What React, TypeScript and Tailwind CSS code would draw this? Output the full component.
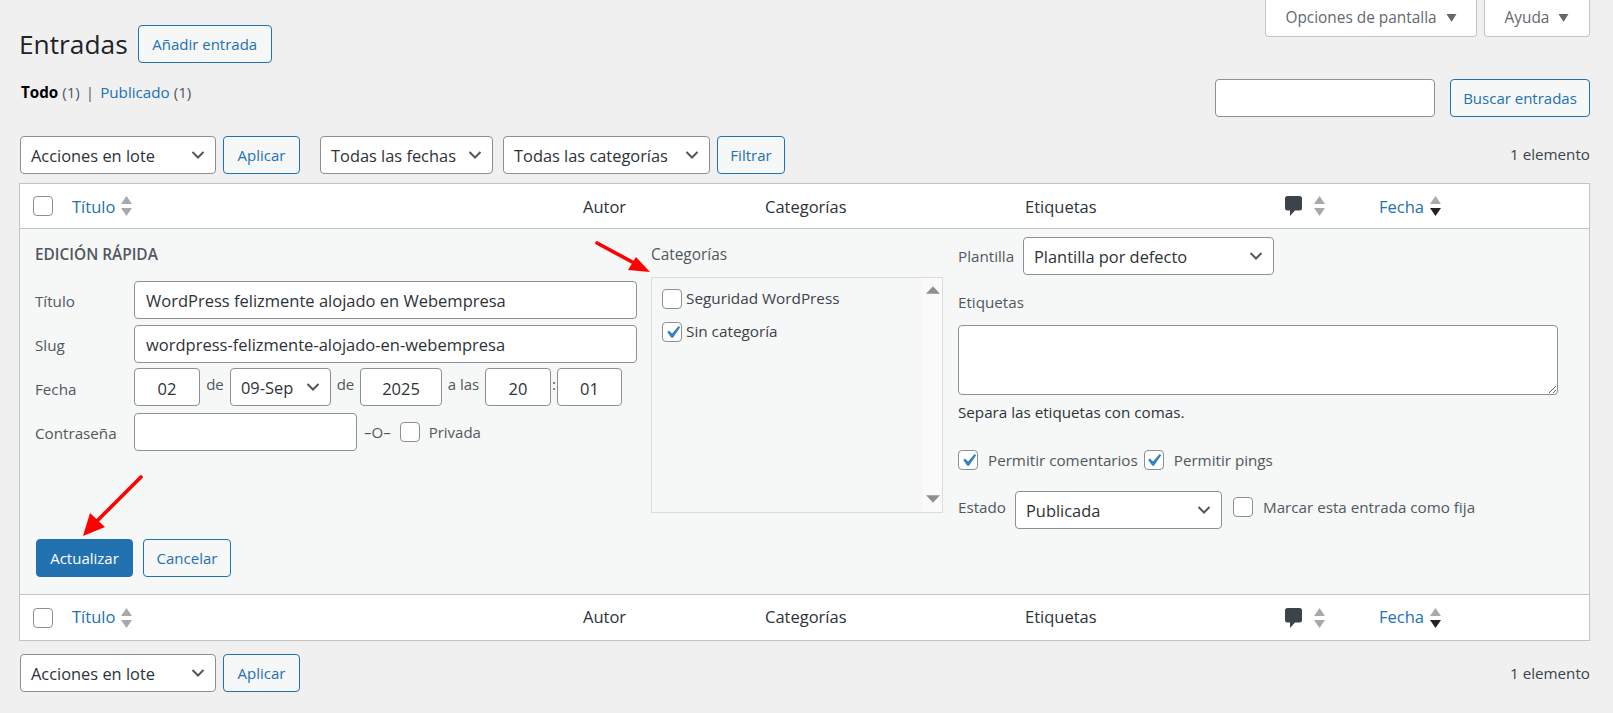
import React from "react";

const Check = () => (
  <svg viewBox="0 0 20 20" className="w-[25px] h-[25px] shrink-0">
    <path d="M14.83 4.89l1.34.94-5.81 8.38H9.02L5.78 9.67l1.34-1.25 2.57 2.4z" fill="#3582c4" />
  </svg>
);

const Box = ({ checked = false, className = "" }: { checked?: boolean; className?: string }) => (
  <span className={"w-[20px] h-[20px] shrink-0 rounded-[4px] border border-[#8c8f94] bg-white flex items-center justify-center overflow-visible " + className}>
    {checked ? <Check /> : null}
  </span>
);

const Chevron = () => (
  <svg viewBox="0 0 20 20" className="w-[20px] h-[20px] shrink-0 text-[#50575e]">
    <path d="M4.5 7 L10 12.5 L15.5 7" fill="none" stroke="currentColor" strokeWidth="2" />
  </svg>
);

const Select = ({ label, className = "" }: { label: string; className?: string }) => (
  <div className={"flex items-center justify-between h-[38px] border border-[#8c8f94] rounded-[4px] bg-white pl-[10px] pr-[7px] text-[16.4px] text-[#2c3338] " + className}>
    <span className="whitespace-nowrap pt-[3px]">{label}</span>
    <Chevron />
  </div>
);

const Btn = ({ label, className = "" }: { label: string; className?: string }) => (
  <button className={"h-[38px] border border-[#2271b1] rounded-[4px] bg-[#f6f7f7] text-[#2271b1] text-[15px] flex items-center justify-center whitespace-nowrap " + className}>
    {label}
  </button>
);

const Sort = ({ active = false }: { active?: boolean }) => (
  <svg viewBox="0 0 11 20" className="w-[11px] h-[20px] shrink-0">
    <path d="M5.5 0 L11 8 L0 8 Z" fill="#a7aaad" />
    <path d="M5.5 20 L11 12 L0 12 Z" fill={active ? "#1d2327" : "#a7aaad"} />
  </svg>
);

const Comment = () => (
  <svg viewBox="0 0 17 20" className="w-[17px] h-[20px] shrink-0">
    <path d="M2.5 0 H14.5 Q17 0 17 2.5 V12 Q17 14.5 14.5 14.5 H10 L5 20 V14.5 H2.5 Q0 14.5 0 12 V2.5 Q0 0 2.5 0 Z" fill="#3c434a" />
  </svg>
);

const Head = ({ className = "", t = "" }: { className?: string; t?: string }) => (
  <div className={"grid grid-cols-[52px_511px_182px_260px_260px_94px_1fr] items-center h-[45px] bg-white text-[16.5px] text-[#2c3338] " + className}>
    <div className="pl-[13px]"><Box /></div>
    <div className="flex items-center gap-[6px] text-[#2271b1]"><span className={t}>Título</span> <Sort /></div>
    <div className={t}>Autor</div>
    <div className={t}>Categorías</div>
    <div className={t}>Etiquetas</div>
    <div className="flex items-center gap-[12px]"><Comment /><Sort /></div>
    <div className="flex items-center gap-[6px] text-[#2271b1]"><span className={t}>Fecha</span> <Sort active /></div>
  </div>
);

const Input = ({ value = "", className = "" }: { value?: string; className?: string }) => (
  <input
    readOnly
    value={value}
    className={"h-[38px] border border-[#8c8f94] rounded-[4px] bg-white text-[16.5px] text-[#2c3338] outline-none " + className}
  />
);

const Label = ({ text, className = "pt-[2px]" }: { text: string; className?: string }) => (
  <span className={"w-[99px] shrink-0 text-[15.2px] text-[#50575e] " + className}>{text}</span>
);

export default function App() {
  return (
    <div
      className="relative w-[1613px] h-[713px] overflow-hidden bg-[#f0f0f1] pl-[19px] pr-[23px] text-[15px] text-[#3c434a]"
      style={{ fontFamily: '"Open Sans", "Noto Sans", sans-serif' }}
    >
      {/* Title + screen tabs */}
      <div className="flex justify-between items-start h-[79px]">
        <div className="flex items-center gap-[10px] pt-[25px]">
          <h1 className="text-[26.3px] text-[#1d2327] leading-[38px]">Entradas</h1>
          <Btn label="Añadir entrada" className="w-[134px]" />
        </div>
        <div className="flex gap-[7px]">
          <div className="w-[212px] h-[37px] bg-white border border-t-0 border-[#c3c4c7] rounded-b-[4px] flex items-center justify-center gap-[9px] text-[15.4px] text-[#646970]">
            Opciones de pantalla
            <svg viewBox="0 0 10 8" className="w-[11px] h-[8px]"><path d="M0 0 H10 L5 8 Z" fill="#646970" /></svg>
          </div>
          <div className="w-[106px] h-[37px] bg-white border border-t-0 border-[#c3c4c7] rounded-b-[4px] flex items-center justify-center gap-[9px] text-[15.4px] text-[#646970]">
            Ayuda
            <svg viewBox="0 0 10 8" className="w-[11px] h-[8px]"><path d="M0 0 H10 L5 8 Z" fill="#646970" /></svg>
          </div>
        </div>
      </div>

      {/* Filters + search */}
      <div className="flex justify-between items-start h-[37px]">
        <div className="pl-[2px] pt-[2px] text-[15.2px] text-[#50575e]">
          <span className="font-bold text-[#000]">Todo</span> (1)
          <span className="mx-[6px] text-[#50575e]">|</span>
          <span className="text-[#2271b1]">Publicado</span> (1)
        </div>
        <div className="flex gap-[15px]">
          <Input className="w-[220px] h-[37px]" />
          <Btn label="Buscar entradas" className="w-[140px] h-[37px]" />
        </div>
      </div>

      {/* Top tablenav */}
      <div className="flex items-center h-[38px] mt-[20px] pl-[1px]">
        <Select label="Acciones en lote" className="w-[196px]" />
        <Btn label="Aplicar" className="w-[77px] ml-[7px]" />
        <Select label="Todas las fechas" className="w-[173px] ml-[20px]" />
        <Select label="Todas las categorías" className="w-[207px] ml-[10px]" />
        <Btn label="Filtrar" className="w-[68px] ml-[7px]" />
        <span className="ml-auto text-[15.2px] -mt-[2px]">1 elemento</span>
      </div>

      {/* Table */}
      <div className="mt-[9px] border border-[#c3c4c7] bg-white w-[1571px]">
        <Head className="border-b border-[#c3c4c7] h-[45px]" t="pt-[2px]" />

        <div className="bg-[#f6f7f7] h-[365px] pl-[15px] flex flex-col">
          <div className="flex flex-1">
            {/* left column */}
            <div className="w-[602px] shrink-0 pt-[16px]">
              <div className="font-semibold text-[15.4px] text-[#50575e] uppercase leading-[19px] h-[19px]">Edición rápida</div>
              <div className="flex items-center mt-[17px]">
                <Label text="Título" />
                <Input value="WordPress felizmente alojado en Webempresa" className="flex-1 px-[11px]" />
              </div>
              <div className="flex items-center mt-[6px]">
                <Label text="Slug" />
                <Input value="wordpress-felizmente-alojado-en-webempresa" className="flex-1 px-[11px]" />
              </div>
              <div className="flex items-center mt-[5px]">
                <Label text="Fecha" className="pt-[4px]" />
                <Input value="02" className="w-[66px] text-center pt-[2px]" />
                <span className="w-[30px] text-center text-[#50575e] -mt-[5px]">de</span>
                <Select label="09-Sep" className="w-[101px]" />
                <span className="w-[29px] text-center text-[#50575e] -mt-[5px]">de</span>
                <Input value="2025" className="w-[82px] text-center pt-[2px]" />
                <span className="w-[43px] text-center text-[#50575e] -mt-[5px] whitespace-nowrap">a las</span>
                <Input value="20" className="w-[66px] text-center pt-[2px]" />
                <span className="w-[6px] text-center text-[#50575e] -mt-[5px]">:</span>
                <Input value="01" className="w-[65px] text-center pt-[2px]" />
              </div>
              <div className="flex items-center mt-[7px]">
                <Label text="Contraseña" />
                <Input className="w-[223px] h-[36px]" />
                <span className="ml-[7px] text-[#50575e] whitespace-nowrap">–O–</span>
                <Box className="ml-[9px]" />
                <span className="ml-[9px] text-[#50575e]">Privada</span>
              </div>
            </div>

            {/* categories */}
            <div className="w-[292px] shrink-0 ml-[14px] pt-[16px]">
              <div className="text-[15.4px] text-[#50575e] leading-[19px]">Categorías</div>
              <div className="mt-[13px] h-[236px] border border-[#dcdcde] flex bg-[#f6f7f7]">
                <div className="flex-1 pl-[10px] pt-[11px] text-[15.3px] text-[#3c434a]">
                  <div className="flex items-center gap-[4px] h-[20px]"><Box /><span className="pb-[2px]">Seguridad WordPress</span></div>
                  <div className="flex items-center gap-[4px] h-[20px] mt-[13px]"><Box checked /><span className="pb-[2px]">Sin categoría</span></div>
                </div>
                <div className="w-[19px] bg-[#fafafa] flex flex-col justify-between items-center pt-[8px] pb-[9px]">
                  <svg viewBox="0 0 13 7" className="w-[14px] h-[8px]"><path d="M6.5 0 L13 7 H0 Z" fill="#8c8f94" /></svg>
                  <svg viewBox="0 0 13 7" className="w-[14px] h-[8px]"><path d="M0 0 H13 L6.5 7 Z" fill="#8c8f94" /></svg>
                </div>
              </div>
            </div>

            {/* right column */}
            <div className="w-[600px] shrink-0 ml-[15px] pt-[8px] text-[15.2px] text-[#50575e]">
              <div className="flex items-center">
                <span className="w-[65px]">Plantilla</span>
                <Select label="Plantilla por defecto" className="w-[251px]" />
              </div>
              <div className="mt-[18px] leading-[19px]">Etiquetas</div>
              <textarea readOnly className="block mt-[13px] w-full h-[70px] border border-[#8c8f94] rounded-[4px] bg-white outline-none" />
              <div className="mt-[8px] text-[#2c3338] leading-[19px]">Separa las etiquetas con comas.</div>
              <div className="flex items-center mt-[27px]">
                <Box checked />
                <span className="ml-[10px]">Permitir comentarios</span>
                <Box checked className="ml-[6px]" />
                <span className="ml-[10px]">Permitir pings</span>
              </div>
              <div className="flex items-center mt-[19px]">
                <span className="w-[57px] -mt-[5px]">Estado</span>
                <Select label="Publicada" className="w-[207px] h-[37px]" />
                <Box className="ml-[11px] -mt-[5px]" />
                <span className="ml-[10px] -mt-[5px]">Marcar esta entrada como fija</span>
              </div>
            </div>
          </div>

          <div className="flex gap-[10px] pb-[17px] pl-[1px]">
            <button className="w-[97px] h-[38px] rounded-[4px] bg-[#2271b1] border border-[#2271b1] text-white text-[15px]">Actualizar</button>
            <Btn label="Cancelar" className="w-[88px] bg-transparent" />
          </div>
        </div>

        <Head className="border-t border-[#c3c4c7] h-[46px]" />
      </div>

      {/* Bottom tablenav */}
      <div className="flex items-center h-[38px] mt-[13px] pl-[1px]">
        <Select label="Acciones en lote" className="w-[196px]" />
        <Btn label="Aplicar" className="w-[77px] ml-[7px]" />
        <span className="ml-auto text-[15.2px]">1 elemento</span>
      </div>

      {/* annotation arrows */}
      <svg viewBox="0 0 1613 713" className="absolute inset-0 w-[1613px] h-[713px] pointer-events-none">
        <path d="M597 243 L636 264" stroke="#fe0000" strokeWidth="3.6" strokeLinecap="round" />
        <path d="M650 272 L628 270 L636 257 Z" fill="#fe0000" />
        <path d="M141 477 L96 522" stroke="#fe0000" strokeWidth="3.6" strokeLinecap="round" />
        <path d="M83 536 L90 513 L105 527 Z" fill="#fe0000" />
      </svg>
    </div>
  );
}
